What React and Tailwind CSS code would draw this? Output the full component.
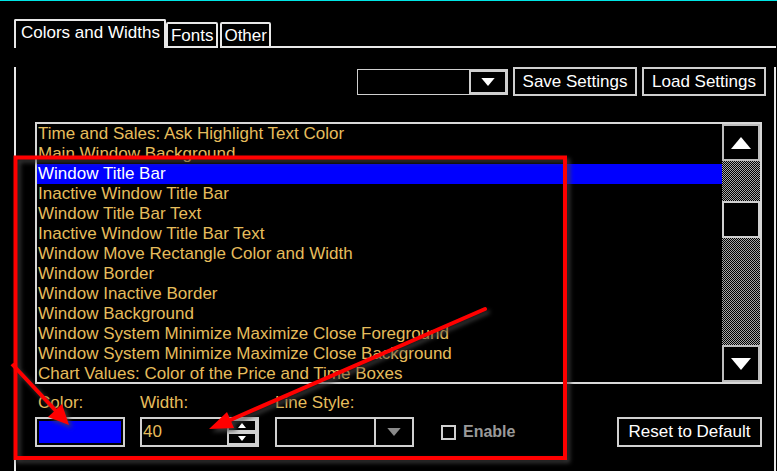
import React from 'react';

const items = [
  'Time and Sales: Ask Highlight Text Color',
  'Main Window Background',
  'Window Title Bar',
  'Inactive Window Title Bar',
  'Window Title Bar Text',
  'Inactive Window Title Bar Text',
  'Window Move Rectangle Color and Width',
  'Window Border',
  'Window Inactive Border',
  'Window Background',
  'Window System Minimize Maximize Close Foreground',
  'Window System Minimize Maximize Close Background',
  'Chart Values: Color of the Price and Time Boxes',
];

const checker = 'bg-[repeating-conic-gradient(#a8a8a8_0%_25%,#000_0%_50%)] bg-[length:2px_2px]';

const Tri = ({ up, className = '' }) => (
  <svg width="20" height="12" viewBox="0 0 20 12" className={className}>
    <polygon points={up ? '10,0 20,12 0,12' : '0,0 20,0 10,12'} fill="currentColor" />
  </svg>
);

const Annotations = () => (
  <svg
    width="777"
    height="471"
    className="absolute inset-0 pointer-events-none drop-shadow-[3px_3px_2px_rgba(70,70,70,0.8)]"
  >
    <rect x="15.5" y="156.5" width="549.5" height="300.5" fill="none" stroke="#ff0000" strokeWidth="4" />
    {/* arrow to color swatch */}
    <line x1="12" y1="363" x2="57" y2="411" stroke="#ff0000" strokeWidth="4" />
    <polygon points="69,424 48,416 62,403" fill="#ff0000" />
    {/* arrow to width box */}
    <line x1="485" y1="308" x2="228" y2="420" stroke="#ff0000" strokeWidth="4" strokeLinecap="round" />
    <polygon points="209,428 227,411 234,427" fill="#ff0000" />
  </svg>
);

export default function App() {
  return (
    <div className="relative w-[777px] h-[471px] bg-black overflow-hidden border-t border-[#00e5e5] font-['Liberation_Sans',Arial,sans-serif] text-[17px] leading-[20px]">
      {/* tab strip */}
      <div className="flex items-end ml-[14px] mt-[18px] w-[762px]">
        <div className="h-[29px] border-2 border-b-0 border-[#e8e8e8] rounded-t-[2px] pl-[5px] pr-[4px] pt-[2px] text-white">
          Colors and Widths
        </div>
        <div className="h-[26px] border-2 border-[#e8e8e8] rounded-t-[2px] px-[3px] pt-[2px] text-white">
          Fonts
        </div>
        <div className="h-[26px] ml-[2px] border-2 border-[#e8e8e8] rounded-t-[2px] px-[2px] pt-[2px] text-white">
          Other
        </div>
        <div className="flex-1 border-b-2 border-[#e8e8e8]" />
      </div>

      {/* panel */}
      <div className="ml-[14px] w-[762px] h-[430px] border-x-2 border-[#e8e8e8]">
        {/* top controls */}
        <div className="flex items-center justify-end gap-[5px] mt-[19px] mr-[8px]">
          <div className="flex w-[151px] h-[26px] border border-[#cfcfcf]">
            <div className="flex-1" />
            <div className="w-[38px] border-2 border-[#cfcfcf] flex items-center justify-center text-white">
              <Tri className="w-[14px] h-[8px]" />
            </div>
          </div>
          <button className="w-[124px] h-[29px] border-2 border-[#cfcfcf] text-white">Save Settings</button>
          <button className="w-[124px] h-[29px] border-2 border-[#cfcfcf] text-white">Load Settings</button>
        </div>

        {/* list */}
        <div className="flex ml-[19px] mt-[26px] w-[727px] h-[262px] border-2 border-[#d8d8d8]">
          <div className="flex-1">
            {items.map((t, i) => (
              <div
                key={i}
                className={`h-[20px] pl-[1px] whitespace-nowrap ${i === 2 ? 'bg-[#0000ff] text-white' : 'text-[#e6bd5c]'}`}
              >
                {t}
              </div>
            ))}
          </div>
          <div className="w-[38px] flex flex-col">
            <div className="h-[37px] border-2 border-[#bdbdbd] flex items-center justify-center text-white">
              <Tri up className="w-[20px] h-[12px]" />
            </div>
            <div className={`h-[40px] ${checker}`} />
            <div className="h-[37px] border-2 border-[#d0d0d0] bg-black" />
            <div className={`flex-1 ${checker}`} />
            <div className="h-[37px] border-2 border-[#bdbdbd] flex items-center justify-center text-white">
              <Tri className="w-[20px] h-[12px]" />
            </div>
          </div>
        </div>

        {/* bottom controls */}
        <div className="flex items-end ml-[19px] mt-[9px] w-[727px]">
          <div className="w-[90px]">
            <div className="pl-[3px] text-[#e6bd5c] mb-[4px]">Color:</div>
            <div className="h-[30px] border-2 border-[#d0d0d0] p-[2px]">
              <div className="h-full bg-[#0000ff]" />
            </div>
          </div>
          <div className="w-[119px] ml-[15px]">
            <div className="text-[#e6bd5c] mb-[4px]">Width:</div>
            <div className="flex h-[30px] border-2 border-[#d0d0d0]">
              <div className="flex-1 pl-[1px] pt-[3px] text-[#e6bd5c]">40</div>
              <div className="w-[30px] flex flex-col">
                <div className="flex-1 border-2 border-[#d0d0d0] flex items-center justify-center text-white">
                  <Tri up className="w-[8px] h-[5px]" />
                </div>
                <div className="flex-1 border-2 border-[#d0d0d0] flex items-center justify-center text-white">
                  <Tri className="w-[8px] h-[5px]" />
                </div>
              </div>
            </div>
          </div>
          <div className="w-[139px] ml-[16px]">
            <div className="text-[#e6bd5c] mb-[4px]">Line Style:</div>
            <div className="flex h-[30px] border-2 border-[#d0d0d0]">
              <div className="flex-1" />
              <div className="w-[38px] border-l-2 border-[#d0d0d0] flex items-center justify-center text-[#8a8a8a]">
                <Tri className="w-[14px] h-[8px]" />
              </div>
            </div>
          </div>
          <div className="flex items-center h-[30px] ml-[27px]">
            <div className="w-[15px] h-[15px] border-2 border-[#d0d0d0]" />
            <span className="ml-[7px] text-[16px] text-[#9a9a9a] font-bold">Enable</span>
          </div>
          <div className="flex-1" />
          <button className="w-[145px] h-[30px] border-2 border-[#d0d0d0] text-white">Reset to Default</button>
        </div>
      </div>

      <Annotations />
    </div>
  );
}
